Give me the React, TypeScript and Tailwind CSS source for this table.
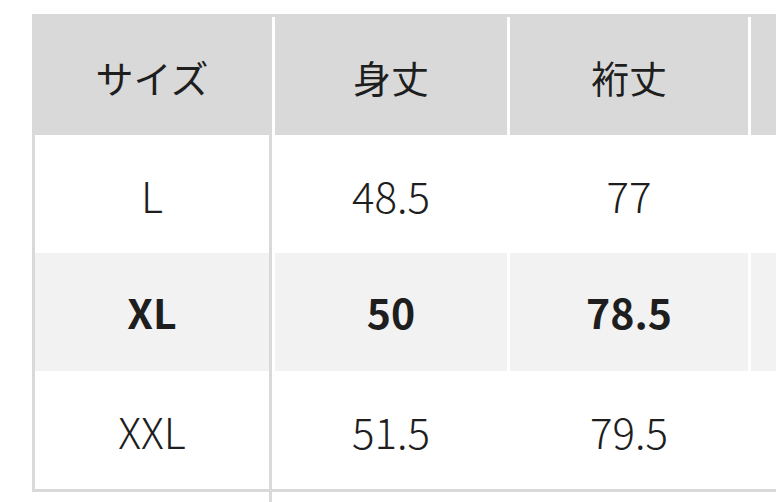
import React from "react"

type Row = { size: string; body: string; sleeve: string; bold?: boolean }

const rows: Row[] = [
  { size: "L", body: "48.5", sleeve: "77" },
  { size: "XL", body: "50", sleeve: "78.5", bold: true },
  { size: "XXL", body: "51.5", sleeve: "79.5" },
]

const font = { fontFamily: '"Noto Sans CJK JP", "Noto Sans", sans-serif' }

export default function App() {
  return (
    <div className="h-[502px] w-[776px] overflow-hidden bg-white text-[#1e1e1e]" style={font}>
      <div className="ml-[32px] mt-[14px] w-[900px]">
        {/* header */}
        <div className="flex bg-[#d9d9d9] pt-[3px]">
          <div className="flex h-[118px] w-[240px] items-center justify-center text-[38px]">サイズ</div>
          <div className="flex h-[118px] w-[235px] items-center justify-center border-l-[3px] border-white text-[38px]">
            身丈
          </div>
          <div className="flex h-[118px] w-[241px] items-center justify-center border-l-[3px] border-white text-[38px]">
            裄丈
          </div>
          <div className="h-[118px] flex-1 border-l-[3px] border-white" />
        </div>

        {/* body */}
        {rows.map((row) => {
          const bg = row.bold ? "bg-[#f2f2f2]" : "bg-white"
          const text = row.bold ? "font-bold text-[41px]" : "font-light text-[42px]"
          return (
            <div key={row.size} className={`flex h-[118px] ${text}`}>
              <div
                className={`flex w-[240px] items-center justify-center border-x-[3px] border-[#d9d9d9] ${bg}`}>
                {row.size}
              </div>
              <div className={`ml-[3px] flex w-[232px] items-center justify-center ${bg}`}>{row.body}</div>
              <div className={`ml-[3px] flex w-[238px] items-center justify-center ${bg}`}>{row.sleeve}</div>
              <div className={`ml-[3px] flex-1 ${bg}`} />
            </div>
          )
        })}
        <div className="h-[3px] bg-[#d9d9d9]" />
        <div className="h-[12px] w-[240px] border-r-[3px] border-[#d9d9d9]" />
      </div>
    </div>
  )
}
